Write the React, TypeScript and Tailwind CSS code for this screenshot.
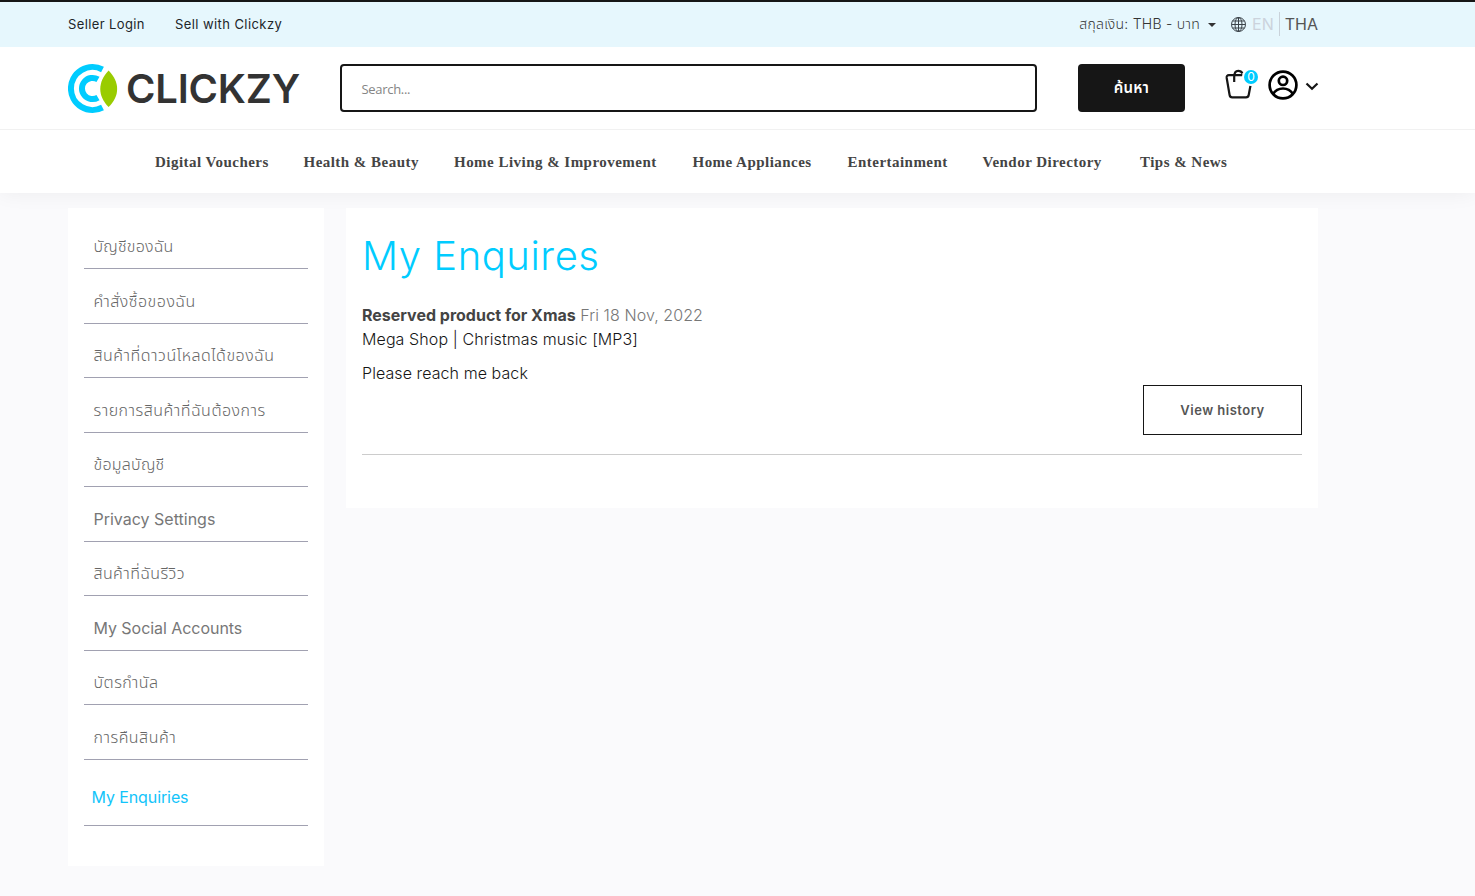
import React from 'react';

interface MenuItem {
  label: string;
  className?: string;
}

const navItems: MenuItem[] = [
  { label: 'Digital Vouchers', className: 'w-[148.500px]' },
  { label: 'Health & Beauty', className: 'w-[150.500px]' },
  { label: 'Home Living & Improvement', className: 'w-[238.500px]' },
  { label: 'Home Appliances', className: 'w-[155px]' },
  { label: 'Entertainment', className: 'w-[135px]' },
  { label: 'Vendor Directory', className: 'w-[157.500px]' },
  { label: 'Tips & News' },
];

const accountItems: MenuItem[] = [
  { label: 'บัญชีของฉัน', className: 'font-light tracking-[0.2px]' },
  { label: 'คำสั่งซื้อของฉัน', className: 'font-light tracking-[0.5px]' },
  { label: 'สินค้าที่ดาวน์โหลดได้ของฉัน', className: 'font-light tracking-[0.5px]' },
  { label: 'รายการสินค้าที่ฉันต้องการ', className: 'font-light tracking-[0.5px]' },
  { label: 'ข้อมูลบัญชี', className: 'font-light tracking-[0.25px]' },
  { label: 'Privacy Settings', className: 'text-[#777]' },
  { label: 'สินค้าที่ฉันรีวิว', className: 'font-light tracking-[0.4px]' },
  { label: 'My Social Accounts', className: 'tracking-[-0.05px] text-[#777]' },
  { label: 'บัตรกำนัล', className: 'font-light tracking-[0.5px]' },
  { label: 'การคืนสินค้า', className: 'font-light tracking-[0.5px]' },
];

const LogoMark = () => (
  <svg className="shrink-0" width="50" height="50" viewBox="0 0 50 50" fill="none">
    <path d="M34.500 5.500A21.500 21.500 0 1 0 34.500 43.500" stroke="#00ccff" strokeWidth="6" />
    <path d="M30 15.400A10.600 10.600 0 1 0 30 33.600" stroke="#00ccff" strokeWidth="6" />
    <path d="M40.600 6.500C52 18 52 32 40.600 43C29.500 32 29.500 18 40.600 6.500Z" fill="#99cc00" />
  </svg>
);

const GlobeIcon = () => (
  <svg width="16" height="16" viewBox="0 0 16 16" fill="none" stroke="#3a4248" strokeWidth="1">
    <circle cx="7.500" cy="8.500" r="7" />
    <ellipse cx="7.500" cy="8.500" rx="3.500" ry="7" />
    <path d="M7.500 1.500v14M0.500 8.500h14M1.500 5h12M1.500 12h12" />
  </svg>
);

const BagIcon = () => (
  <svg width="28" height="30" viewBox="0 0 28 30" fill="none" stroke="#161616" strokeWidth="2.200" strokeLinejoin="round">
    <path d="M18 6.200H4Q1.300 6.200 1.700 9L4.600 26Q5 28.300 7.200 28.300H21Q23.300 28.300 23.700 26L25.500 16.500" />
    <path d="M9.200 13V8Q9.200 1.800 13.200 1.800Q16.200 1.800 17.500 4.500" />
  </svg>
);

const UserIcon = () => (
  <svg width="30" height="30" viewBox="0 0 30 30" fill="none" stroke="#000" strokeWidth="2.700">
    <circle cx="15" cy="15" r="13.400" />
    <circle cx="15" cy="10.800" r="4.200" />
    <path d="M5 24Q8.500 18.500 15 18.500T25 24" />
  </svg>
);

const TopBar = () => (
  <div className="h-[47px] border-t-2 border-[#161616] bg-[#e6f7fd]">
    <div className="ml-[68px] flex h-[44px] w-[1250px] items-center text-[#212529]">
      <a className="w-[107px] pt-px text-[13px] tracking-[0.38px]">Seller Login</a>
      <a className="pt-px text-[13px] tracking-[0.42px]">Sell with Clickzy</a>
      <div className="ml-auto flex items-center">
        <span className="pb-px text-[14px] font-light tracking-[0.25px] whitespace-nowrap text-[#333]">สกุลเงิน: THB - บาท</span>
        <span className="mt-0.5 ml-[8px] border-x-4 border-t-4 border-x-transparent border-t-[#333]" />
        <span className="ml-[15px]">
          <GlobeIcon />
        </span>
        <span className="ml-[5px] text-[16px] text-[#ccd3dc]">EN</span>
        <span className="ml-[5px] h-6 border-l border-[#c9d2da]" />
        <span className="ml-[5px] text-[16px] text-[#555]">THA</span>
      </div>
    </div>
  </div>
);

const Header = () => (
  <header className="relative z-10 h-[83px] border-b border-[#f1f1f1] bg-white">
    <div className="ml-[68px] flex w-[1251px] pt-[17px]">
      <div className="flex w-[272px] shrink-0">
        <LogoMark />
        <span className="ml-[8px] text-[40px] leading-[49px] font-semibold tracking-[-0.2px] text-[#333]">CLICKZY</span>
      </div>
      <div className="flex h-12 w-[697px] shrink-0 items-center rounded-[4px] border-2 border-[#161616] pt-[3px] pl-[19.500px] font-['Open_Sans',sans-serif] text-[13px] font-medium tracking-[-0.3px] text-[#858585]">
        Search...
      </div>
      <button className="ml-[41px] h-12 w-[107px] rounded-[4px] bg-[#161616] text-[15px] font-semibold tracking-[0.2px] text-white">ค้นหา</button>
      <div className="relative mt-[5px] ml-[40px] h-[30px] w-[43px]">
        <BagIcon />
        <span className="absolute top-[1px] left-[19px] flex h-[14px] w-[14px] items-center justify-center rounded-full bg-[#00ccff] text-[12px] text-white ring-2 ring-white">
          0
        </span>
      </div>
      <div className="mt-[6px]">
        <UserIcon />
      </div>
      <svg className="mt-[18px] ml-[7px]" width="14" height="10" viewBox="0 0 14 10" fill="none" stroke="#161616" strokeWidth="2.200">
        <path d="M1.500 1.500L7 6.800L12.500 1.500" />
      </svg>
    </div>
  </header>
);

const Nav = () => (
  <nav className="flex h-[63px] bg-white pl-[155px] font-['Liberation_Serif',serif] text-[15px] leading-[65px] font-bold tracking-[0.47px] whitespace-nowrap text-[#444] shadow-[0_0_20px_rgba(0,0,0,0.06)]">
    {navItems.map(item => (
      <a key={item.label} className={item.className}>
        {item.label}
      </a>
    ))}
  </nav>
);

const Sidebar = () => (
  <aside className="h-[658px] w-64 bg-white px-4 pt-[6.500px]">
    {accountItems.map(item => (
      <div key={item.label} className="h-[54.500px] border-b border-[#a1a1b1] pt-[19.500px] pl-[9.500px] text-[16px] leading-6 whitespace-nowrap text-[#666]">
        <span className={item.className}>{item.label}</span>
      </div>
    ))}
    <div className="h-[66px] border-b border-[#a1a1b1] pt-[25px] pl-[7.500px] text-[16px] leading-6 tracking-[-0.1px] text-[#12c4fa]">My Enquiries</div>
  </aside>
);

const Enquiries = () => (
  <main className="h-[300px] w-[972px] bg-white px-4 pt-6 text-[16px] leading-6 text-[#161616]">
    <h1 className="text-[40px] leading-[47px] font-light tracking-[0.55px] text-[#00ccff]">My Enquires</h1>
    <div className="mt-[24px]">
      <b className="font-bold text-[#444]">Reserved product for Xmas</b>{' '}
      <span className="font-light tracking-[0.08px] text-[#777]">Fri 18 Nov, 2022</span>
    </div>
    <div className="font-light tracking-[0.1px]">Mega Shop | Christmas music [MP3]</div>
    <p className="mt-[10px] font-light tracking-[0.08px]">Please reach me back</p>
    <div className="flex h-[70px] justify-end border-b border-[#ccc]">
      <button className="h-[50px] w-[159px] border border-[#161616] text-[13px] font-semibold tracking-[0.5px] text-[#555]">
        View history
      </button>
    </div>
  </main>
);

export default function App() {
  return (
    <div className="h-[896px] w-[1475px] overflow-hidden bg-[#fafafc] font-[Inter,'Noto_Sans_Thai',sans-serif]">
      <TopBar />
      <Header />
      <Nav />
      <div className="relative mt-[15px] ml-[68px] flex items-start gap-[22px]">
        <Sidebar />
        <Enquiries />
      </div>
    </div>
  );
}
